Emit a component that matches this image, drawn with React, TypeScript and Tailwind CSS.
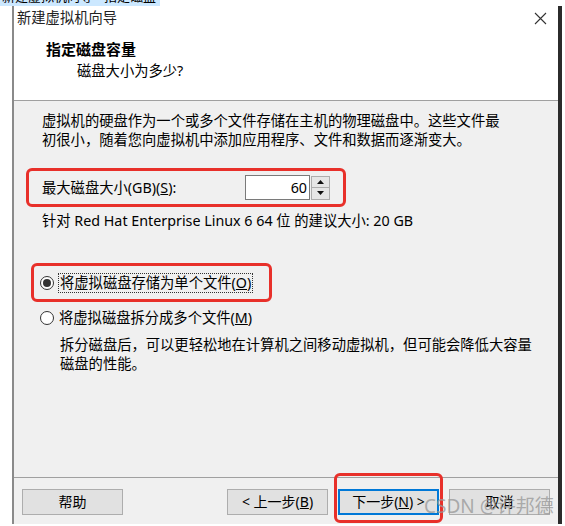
const font = "font-['Noto_Sans','Noto_Sans_CJK_SC',sans-serif]";

const Radio = ({ checked = false }: { checked?: boolean }) => (
  <span className="w-[14px] h-[14px] rounded-full border border-[#333] bg-white flex items-center justify-center shrink-0">
    {checked && <span className="w-[8px] h-[8px] rounded-full bg-[#333]" />}
  </span>
);

const WinButton = ({
  children,
  primary = false,
}: {
  children: React.ReactNode;
  primary?: boolean;
}) => (
  <button
    type="button"
    className={`w-[101px] h-[26px] flex items-center justify-center text-[14px] leading-[18px] text-black bg-[#e1e1e1] ${
      primary ? "border-2 border-[#0078d7]" : "border border-[#adadad]"
    }`}
  >
    {children}
  </button>
);

export default function App() {
  return (
    <div
      className={`w-[565px] h-[526px] bg-white flex flex-col overflow-hidden relative text-black ${font}`}
    >
      {/* clipped window caption from the screenshot above */}
      <div className="h-[6px] overflow-hidden flex">
        <div className="w-[160px] bg-[#cce8ff] overflow-hidden">
          <div className="-mt-[11px] text-[13px] leading-[14px] whitespace-nowrap pl-[2px]">
            新建虚拟机向导 - 指定磁盘
          </div>
        </div>
      </div>

      <div className="flex h-[518px]">
        <div className="w-[12px] bg-white" />
        <div className="w-[2px] bg-[#8a8a8a]" />

        <div className="w-[544px] flex flex-col bg-[#f0f0f0]">
          {/* header */}
          <div className="h-[94px] bg-white flex flex-col">
            <div className="flex items-center justify-between h-[22px] mt-[1px] pl-[3px] pr-[11px]">
              <span className="text-[14.3px] text-[#222]">新建虚拟机向导</span>
              <svg width="13" height="13" viewBox="0 0 13 13" className="text-[#333]">
                <path d="M1 1L12 12M12 1L1 12" stroke="currentColor" strokeWidth="1.1" />
              </svg>
            </div>
            <div className="pl-[32px] mt-[10px] text-[15px] font-bold leading-[20px]">
              指定磁盘容量
            </div>
            <div className="pl-[63px] mt-[2px] text-[14.3px] leading-[20px]">
              磁盘大小为多少?
            </div>
          </div>
          <div className="h-px bg-[#a0a0a0]" />

          {/* body */}
          <div className="flex-1 flex flex-col text-[14.3px] leading-[19px]">
            <p className="pl-[28px] pt-[10px]">
              虚拟机的硬盘作为一个或多个文件存储在主机的物理磁盘中。这些文件最
              <br />
              初很小，随着您向虚拟机中添加应用程序、文件和数据而逐渐变大。
            </p>

            <div className="ml-[12px] mt-[19px] w-[320px] h-[39px] border-[3px] border-[#e8302a] rounded-[6px] flex items-center justify-between px-[13px]">
              <span>
                最大磁盘大小(GB)(<span className="underline">S</span>):
              </span>
              <div className="flex items-center">
                <div className="w-[65px] h-[25px] bg-white border border-[#7a7a7a] flex items-center justify-end pr-[2px]">
                  60
                </div>
                <div className="w-[19px] h-[24px] flex flex-col ml-px">
                  <div className="flex-1 bg-[#e6e6e6] border border-[#adadad] flex items-center justify-center">
                    <svg width="7" height="4" viewBox="0 0 7 4">
                      <path d="M0 4L3.5 0L7 4Z" fill="#111" />
                    </svg>
                  </div>
                  <div className="flex-1 bg-[#e6e6e6] border border-t-0 border-[#adadad] flex items-center justify-center">
                    <svg width="7" height="4" viewBox="0 0 7 4">
                      <path d="M0 0L3.5 4L7 0Z" fill="#111" />
                    </svg>
                  </div>
                </div>
              </div>
            </div>

            <p className="pl-[28px] mt-[4px]">
              针对 Red Hat Enterprise Linux 6 64 位 的建议大小: 20 GB
            </p>

            <div className="ml-[17px] mt-[33px] w-[241px] h-[39px] border-[3px] border-[#e8302a] rounded-[6px] flex items-center pl-[6px]">
              <Radio checked />
              <span className="ml-[4px] px-px border border-dotted border-[#333] leading-[18px]">
                将虚拟磁盘存储为单个文件(<span className="underline">O</span>)
              </span>
            </div>

            <div className="ml-[26px] mt-[6px] h-[19px] flex items-center">
              <Radio />
              <span className="ml-[5px]">
                将虚拟磁盘拆分成多个文件(<span className="underline">M</span>)
              </span>
            </div>

            <p className="pl-[46px] mt-[8px]">
              拆分磁盘后，可以更轻松地在计算机之间移动虚拟机，但可能会降低大容量
              <br />
              磁盘的性能。
            </p>
          </div>

          <div className="h-px bg-[#a0a0a0]" />

          {/* footer */}
          <div className="h-[46px] flex items-start pt-[11px] px-[8px]">
            <WinButton>帮助</WinButton>
            <div className="flex-1" />
            <div className="flex gap-[10px]">
              <WinButton>
                &lt; 上一步(<span className="underline">B</span>)
              </WinButton>
              <div className="relative">
                <WinButton primary>
                  下一步(<span className="underline">N</span>) &gt;
                </WinButton>
                <div className="absolute -left-[4px] -right-[4px] -top-[16px] -bottom-[8px] border-[3px] border-[#e8302a] rounded-[6px]" />
              </div>
              <WinButton>取消</WinButton>
            </div>
          </div>
        </div>

        <div className="w-[4px] bg-[#2b2b2b]" />
        <div className="flex-1 bg-white" />
      </div>

      {/* CSDN watermark */}
      <div className="absolute left-[424px] top-[494px] text-[19px] leading-[24px] text-[#9a9a9a]/80 whitespace-nowrap">
        CSDN @许邦德
      </div>
    </div>
  );
}
